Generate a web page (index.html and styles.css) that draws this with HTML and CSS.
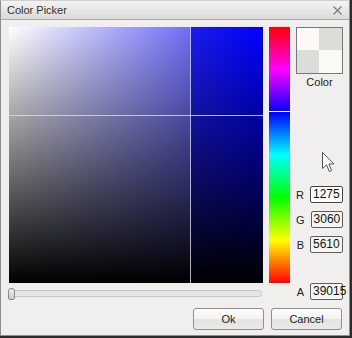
FILE: index.html
```html
<!DOCTYPE html>
<html lang="en">
<head>
    <meta charset="UTF-8">
    <title>Color Picker</title>
    <link rel="stylesheet" href="styles.css">
</head>
<body>
    <div class="window">
        <div class="titlebar">
            <span class="title">Color Picker</span>
            <svg class="close" width="9" height="9" viewBox="0 0 9 9">
                <path d="M0.5 0.5 L8.5 8.5 M8.5 0.5 L0.5 8.5" stroke="#7c7c7c" stroke-width="1.2" fill="none"/>
            </svg>
        </div>
        <div class="content">
            <div class="picker">
                <div class="sv">
                    <div class="cross-v"></div>
                    <div class="cross-h"></div>
                </div>
                <div class="hue">
                    <div class="hue-mark"></div>
                </div>
                <div class="side">
                    <div class="swatch">
                        <i class="light"></i><i class="dark"></i><i class="dark"></i><i class="light"></i>
                    </div>
                    <div class="swatch-label">Color</div>
                    <div class="fields">
                        <div class="field"><span>R</span><div class="box focus">1275</div></div>
                        <div class="field"><span>G</span><div class="box">3060</div></div>
                        <div class="field"><span>B</span><div class="box">5610</div></div>
                    </div>
                </div>
                <div class="slider">
                    <div class="track"></div>
                    <div class="thumb"></div>
                </div>
                <div></div>
                <div class="field"><span>A</span><div class="box">39015</div></div>
            </div>
            <div class="buttons">
                <button class="btn">Ok</button>
                <button class="btn">Cancel</button>
            </div>
        </div>
        <!-- mouse pointer -->
        <svg class="cursor" width="13" height="21" viewBox="0 0 13 21">
            <path d="M0.5 0.5 L0.5 16.5 L4.5 12.8 L7.3 19.5 L9.6 18.5 L6.9 12 L11.8 12 Z" fill="#fff" stroke="#555" stroke-width="1" stroke-linejoin="round"/>
        </svg>
    </div>
</body>
</html>
```

FILE: styles.css
```css
* {
    margin: 0;
    padding: 0;
    box-sizing: border-box;
}
body {
    background: #2c2c2c;
    font-family: "Liberation Sans", Arial, sans-serif;
    color: #222;
}
.window {
    position: relative;
    width: 350px;
    height: 336px;
    background: #f0efed;
    border: 1px solid #8e8e8e;
    border-top-color: #cfcfcd;
}
/* title bar */
.titlebar {
    height: 19px;
    display: flex;
    align-items: center;
    justify-content: space-between;
    padding: 0 7px 0 6px;
    background: linear-gradient(#f3f3f1, #dadad8);
    border-bottom: 1px solid #a9a9a7;
}
.title {
    font-size: 11px;
    color: #333;
}
.close {
    display: block;
}
.content {
    padding: 7px 6px 0 8px;
}
/* picker grid */
.picker {
    display: grid;
    grid-template-columns: 254px 21px 47px;
    grid-template-rows: 256px 17px;
    column-gap: 6px;
}
.sv {
    position: relative;
    background:
        linear-gradient(to bottom, rgba(0, 0, 0, 0), #000),
        linear-gradient(to right, #fff 0, #6e6ef8 181px, #1c1cee 181px, #0000ff 100%);
}
.cross-v {
    position: absolute;
    left: 181px;
    top: 0;
    bottom: 0;
    width: 1px;
    background: rgba(220, 220, 240, 0.8);
}
.cross-h {
    position: absolute;
    top: 88px;
    left: 0;
    right: 0;
    height: 1px;
    background: rgba(220, 220, 240, 0.8);
}
.hue {
    position: relative;
    background: linear-gradient(to bottom, #f00 0%, #f0f 16.67%, #00f 33.33%, #0ff 50%, #0f0 66.67%, #ff0 83.33%, #f00 100%);
}
.hue-mark {
    position: absolute;
    top: 84px;
    left: 0;
    width: 23px;
    height: 1px;
    background: #fff;
}
/* right column */
.side {
    display: flex;
    flex-direction: column;
}
.swatch {
    width: 47px;
    height: 47px;
    border: 1px solid #777;
    display: grid;
    grid-template-columns: 22px 23px;
    grid-template-rows: 22px 23px;
}
.swatch .light {
    background: #fbfaf7;
}
.swatch .dark {
    background: #dcdcd9;
}
.swatch-label {
    margin-top: 2px;
    font-size: 11px;
    line-height: 13px;
    text-align: center;
}
.fields {
    margin-top: auto;
    margin-bottom: 30px;
    display: flex;
    flex-direction: column;
    gap: 8px;
}
.field {
    display: flex;
    align-items: center;
    justify-content: flex-end;
    gap: 6px;
    font-size: 11px;
}
.box {
    width: 33px;
    height: 17px;
    border: 1px solid #5c5c5c;
    border-radius: 2px;
    background: #f6f5f3;
    font-size: 12px;
    line-height: 15px;
    padding-left: 2px;
    white-space: nowrap;
    color: #111;
}
.box.focus {
    background: #fff;
    border-color: #444;
}
/* alpha slider */
.slider {
    position: relative;
}
.track {
    position: absolute;
    left: 0;
    right: 1px;
    top: 7px;
    height: 7px;
    border: 1px solid #c6c6c4;
    border-radius: 4px;
    background: #e6e6e4;
}
.thumb {
    position: absolute;
    left: -1px;
    top: 5px;
    width: 7px;
    height: 12px;
    border: 1px solid #8a8a8a;
    border-radius: 3px 3px 2px 2px;
    background: linear-gradient(#eeeeec, #c9c9c7);
}
/* buttons */
.buttons {
    display: flex;
    justify-content: flex-end;
    gap: 7px;
    margin-top: 8px;
    padding-right: 1px;
}
.btn {
    width: 71px;
    height: 22px;
    border: 1px solid #8f8f8d;
    border-radius: 3px;
    background: linear-gradient(#fcfcfb 0, #f3f3f1 50%, #e4e4e2 52%, #e9e9e7 100%);
    font-family: "Liberation Sans", Arial, sans-serif;
    font-size: 11px;
    color: #222;
}
.cursor {
    position: absolute;
    left: 321px;
    top: 151px;
}
```
